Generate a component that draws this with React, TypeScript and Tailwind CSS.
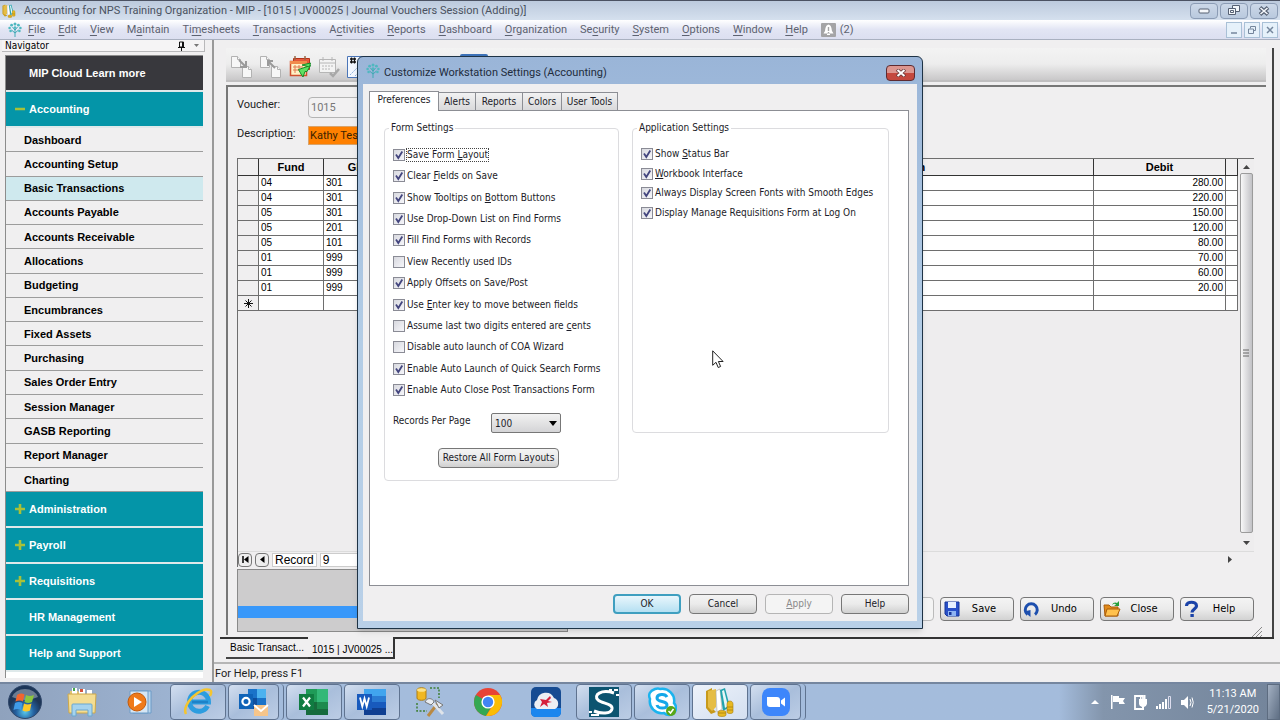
import React from "react";

const menus: [string, string, string][] = [
  ["", "F", "ile"], ["", "E", "dit"], ["", "V", "iew"], ["M", "a", "intain"], ["Ti", "m", "esheets"],
  ["", "T", "ransactions"], ["A", "c", "tivities"], ["", "R", "eports"], ["", "D", "ashboard"],
  ["", "O", "rganization"], ["Se", "c", "urity"], ["", "S", "ystem"], ["", "O", "ptions"],
  ["", "W", "indow"], ["", "H", "elp"],
];

const navItems = [
  "Dashboard", "Accounting Setup", "Basic Transactions", "Accounts Payable", "Accounts Receivable",
  "Allocations", "Budgeting", "Encumbrances", "Fixed Assets", "Purchasing", "Sales Order Entry",
  "Session Manager", "GASB Reporting", "Report Manager", "Charting",
];

const navSections: [string, boolean][] = [
  ["Administration", true], ["Payroll", true], ["Requisitions", true],
  ["HR Management", false], ["Help and Support", false],
];

const rows: [string, string, string][] = [
  ["04", "301", "280.00"], ["04", "301", "220.00"], ["05", "301", "150.00"], ["05", "201", "120.00"],
  ["05", "101", "80.00"], ["01", "999", "70.00"], ["01", "999", "60.00"], ["01", "999", "20.00"],
];

type Setting = [string, string, string, boolean];
const formSettings: Setting[] = [
  ["Save Form ", "L", "ayout", true], ["Clear ", "F", "ields on Save", true],
  ["Show Tooltips on ", "B", "ottom Buttons", true], ["Use Drop-Down List on Find Forms", "", "", true],
  ["Fill Find Forms with Records", "", "", true], ["View Recently used IDs", "", "", false],
  ["Apply Offsets on Save/Post", "", "", true], ["Use ", "E", "nter key to move between fields", true],
  ["Assume last two digits entered are ", "c", "ents", false], ["Disable auto launch of COA Wizard", "", "", false],
  ["Enable Auto Launch of Quick Search Forms", "", "", true], ["Enable Auto Close Post Transactions Form", "", "", true],
];
const appSettings: Setting[] = [
  ["Show ", "S", "tatus Bar", true], ["", "W", "orkbook Interface", true],
  ["Always Display Screen Fonts with Smooth Edges", "", "", true],
  ["Display Manage Requisitions Form at Log On", "", "", true],
];

function TreeLogo() {
  return (
    <svg width="14" height="15" viewBox="0 0 14 15" fill="none" stroke="#3fa9b5">
      <path d="M7 15V6M7 11L3.5 8M7 11l3.5-3M7 8L4.5 5M7 8l2.5-3" strokeWidth="1" />
      <g fill="#4fb8c0" stroke="none">
        <circle cx="7" cy="2" r="1.5" /><circle cx="3.6" cy="3.2" r="1.4" /><circle cx="10.4" cy="3.2" r="1.4" />
        <circle cx="1.6" cy="6" r="1.3" /><circle cx="12.4" cy="6" r="1.3" /><circle cx="2.6" cy="9" r="1.3" />
        <circle cx="11.4" cy="9" r="1.3" /><circle cx="7" cy="5.4" r="1.2" />
      </g>
    </svg>
  );
}

function BooksIcon({ size }: { size: number }) {
  return (
    <svg width={size} height={size} viewBox="0 0 30 30">
      <path d="M1 4l6-3v20l4 4-5 2-5-6z" fill="#c79a1c" />
      <path d="M3 4l8-2v18l-4 4-4-4z" fill="#e5bd45" />
      <path d="M11 4l4-2 2 20-5 3z" fill="#fff" stroke="#a9a79d" strokeWidth=".6" />
      <path d="M15 3l5-2 5 19-7 4z" fill="#23a3ad" />
      <path d="M17 4l2-1 4 16-3 2z" fill="#e8f6f6" />
      <path d="M22 17c0-4 6-4 6 0v8c0 2-6 2-6 0zM13 25c0-2 8-2 8 0v3c0 2-8 2-8 0z" fill="#e8b922" stroke="#a87f10" strokeWidth=".6" />
      <path d="M22 20h6M22 23h6M13 26h8" stroke="#a87f10" strokeWidth=".8" />
    </svg>
  );
}

const caption = "flex h-4 w-7 items-center justify-center rounded-sm border border-[#8b9cb5] bg-linear-to-b from-[#ccd8e8] to-[#b9c9de]";
const child = "flex h-4 w-4 items-center justify-center border border-[#a9c0d6] bg-[#e6f1fa]";

function TitleBar() {
  return (
    <header className="flex h-5 items-center justify-between border-t border-[#4b5262] bg-linear-to-b from-[#bccadd] to-[#d5e0ee] pr-0.5 pl-0.5">
      <div className="flex items-center gap-2">
        <BooksIcon size={14} />
        <h1 className="font-['Roboto',sans-serif] text-[11px] leading-4 whitespace-nowrap text-[#4a5260]">
          Accounting for NPS Training Organization - MIP - [1015 | JV00025 | Journal Vouchers Session (Adding)]
        </h1>
      </div>
      <div className="flex gap-0.5">
        <button aria-label="Minimize" className={caption}>
          <svg width="12" height="6" viewBox="0 0 12 6"><rect x="1" y="1" width="10" height="4" rx="1" fill="#f4f7fb" stroke="#566173" /></svg>
        </button>
        <button aria-label="Restore" className={caption}>
          <svg width="12" height="11" viewBox="0 0 12 11" fill="#f4f7fb" stroke="#566173"><path d="M4.5.5h7v6h-7z" /><path d="M.5 3.500h7v6h-7z" /><path d="M2.500 5.500h3v2h-3z" /></svg>
        </button>
        <button aria-label="Close" className={caption}>
          <svg width="12" height="10" viewBox="0 0 12 10"><path d="M2 1.500l8 7M10 1.500l-8 7" stroke="#566173" strokeWidth="3.800" /><path d="M2.500 2l7 6M9.500 2l-7 6" stroke="#f4f7fb" strokeWidth="1.600" /></svg>
        </button>
      </div>
    </header>
  );
}

function MenuBar() {
  return (
    <nav className="flex h-5 items-center justify-between border-b border-[#a9b0c0] bg-linear-to-b from-white via-[#e2e5f4] to-[#dcdff0] pr-0.5 pl-2">
      <div className="flex items-center">
        <TreeLogo />
        <ul className="flex items-center gap-[13px] pl-1.5 font-['Roboto',sans-serif] text-[11px] leading-4 text-[#5d6270]">
          {menus.map(([a, b, c]) => (
            <li key={a + b + c}><button>{a}<span className="underline underline-offset-2">{b}</span>{c}</button></li>
          ))}
          <li>
            <button className="flex items-center gap-1">
              <svg width="15" height="14" viewBox="0 0 15 14"><rect width="15" height="14" rx="1" fill="#a4a4a6" /><path d="M7.500 1.500c-3 1-3 4-3.500 6.500L2.500 10.500h10L11 8c-.5-2.500-.5-5.500-3.500-6.500z" fill="#fff" /><path d="M7.500 4v4M7.500 9v1" stroke="#a4a4a6" strokeWidth="1.400" /><path d="M6 11.500h3" stroke="#fff" /></svg>
              (2)
            </button>
          </li>
        </ul>
      </div>
      <div className="flex gap-0.5 text-[#75869c]">
        <button aria-label="Minimize document" className={child}><svg width="8" height="8"><path d="M1 7h6" stroke="currentColor" strokeWidth="1.500" /></svg></button>
        <button aria-label="Restore document" className={child}><svg width="8" height="8" fill="none" stroke="currentColor"><path d="M2.500 2.500v-2h5v4h-2M.5 3h5v4.500h-5z" /></svg></button>
        <button aria-label="Close document" className={child}><svg width="8" height="8"><path d="M1 1l6 6M7 1L1 7" stroke="currentColor" strokeWidth="1.500" /></svg></button>
      </div>
    </nav>
  );
}

const section = "flex grow-[356] basis-0 items-center border-b-2 border-[#dfe9ea] bg-[#0495a8] text-left text-white";

function Navigator() {
  return (
    <aside className="flex w-[212px] shrink-0 flex-col bg-[#f0eff0] pr-[7px] pb-1 pl-0.5">
      <div className="flex h-3 items-center justify-between border-r border-b border-[#b8b8ba] bg-[#f5f4f5] px-[3px]">
        <h2 className="font-['DejaVu_Sans_Condensed','DejaVu_Sans',sans-serif] text-[10px] leading-3">Navigator</h2>
        <svg width="24" height="10" viewBox="0 0 24 10"><path d="M2.500 1h4v5h-4zM5.500 1v5M1 6.500h7M4.500 7v3" fill="none" stroke="#111" /><path d="M17 3h5l-2.500 3z" fill="#777" /></svg>
      </div>
      <div className="mt-[3px] mr-0.5 ml-[3px] flex flex-1 flex-col border-t border-l border-[#8c8c8c] bg-white pb-1.5 font-['Liberation_Sans',sans-serif] text-[11px] leading-4 font-bold">
        <button className="flex grow-[356] basis-0 items-center border-b-2 border-[#dfe9ea] bg-[#38383d] pl-[23px] text-white">MIP Cloud Learn more</button>
        <button className={section}>
          <span className="flex w-[23px] justify-center pl-1"><svg width="10" height="4"><path d="M0 2h10" stroke="#a9c138" strokeWidth="2.500" /></svg></span>Accounting
        </button>
        {navItems.map((n) => (
          <a key={n} href="#" className={"flex grow-[244] basis-0 items-center border-b border-[#9c9c9c] pl-[18px] text-black " + (n === "Basic Transactions" ? "bg-[#cfe9ee]" : "bg-[#f0eff0]")}>{n}</a>
        ))}
        {navSections.map(([n, plus]) => (
          <button key={n} className={section}>
            <span className="flex w-[23px] justify-center pl-1">
              {plus && <svg width="10" height="10"><path d="M0 5h10M5 0v10" stroke="#a9c138" strokeWidth="2.600" /></svg>}
            </span>{n}
          </button>
        ))}
      </div>
    </aside>
  );
}

function PagesIcon({ up }: { up: boolean }) {
  return (
    <svg width="22" height="22" viewBox="0 0 22 22" fill="#f7f7f7" stroke="#b2b2b2">
      <path d="M.5.5h6l3 3v8h-9z" /><path d="M6.500.5v3h3" />
      <path d="M11.500 10.500h6l3 3v8h-9z" /><path d="M17.500 10.500v3h3" />
      <path d={up ? "M15 12L9 6M8 10V5h5" : "M8 4l6 6M15 5v6H9"} stroke="#9a9a9a" strokeWidth="2" fill="none" />
    </svg>
  );
}

function Toolbar() {
  return (
    <div className="flex h-[34px] items-center gap-[7px] border-b-2 border-[#c0bfc0] bg-linear-to-b from-[#f3f3f3] via-[#ededed] to-[#c9c8c9] pt-1.5 pl-[5px]">
      <button aria-label="Copy"><PagesIcon up={false} /></button>
      <button aria-label="Paste"><PagesIcon up /></button>
      <button aria-label="Schedule">
        <svg width="22" height="22" viewBox="0 0 22 22"><path d="M4.500 2.500h16v11h-16z" fill="#e9583c" stroke="#b33217" /><path d="M1.500 5.500h16v14h-16z" fill="#fff1c5" stroke="#d0502e" strokeWidth="1.500" /><path d="M1 5h17v3H1z" fill="#f18b4c" /><path d="M4 11h10M4 14h6M6 9v8M10 9v6" stroke="#e07a50" /><path d="M6 0v4M16 0v4" stroke="#964" strokeWidth="1.500" /><path d="M9.500 13.500l12-4-3.500 6h-2l-2 5.500-2-3z" fill="#5fe062" stroke="#178a28" /><path d="M13 9l8.500-2-1 4z" fill="#5fe062" stroke="#178a28" /></svg>
      </button>
      <button aria-label="Complete">
        <svg width="22" height="22" viewBox="0 0 22 22" fill="#f3f3f3" stroke="#b6b6b6"><path d="M1.500 3.500h16v13h-16zM1.500 7h16M5 1v4M14 1v4" /><path d="M4 10h11M4 13h8" strokeDasharray="2 1" /><path d="M12 17l3 3 6-7" fill="none" stroke="#a8a8a8" strokeWidth="2.500" /></svg>
      </button>
      <button aria-label="Number">
        <svg width="22" height="22" viewBox="0 0 22 22"><path d="M.5.5h21v21H.5z" fill="#f3f8ff" stroke="#4b76b8" /><path d="M3 3h6M3 6h6M4.500 1.500v6M7.500 1.500v6" stroke="#111" strokeWidth="1.300" /><path d="M3 19l8-8M8 20l9-9" stroke="#8fb2dc" strokeDasharray="2 1" /></svg>
      </button>
      <button aria-label="Search" className="ml-[84px] h-7 w-7 self-start rounded-xs bg-[#3d72b8]" />
    </div>
  );
}

const cell = "border-r border-b border-[#6e6e6e] px-0.5";

function Grid() {
  return (
    <div className="flex flex-1 flex-col border-t border-l border-[#6e6e6e] bg-[#eeedee] font-['Liberation_Sans',sans-serif]">
      <div className="flex flex-1">
        <div className="flex-1">
          <table className="w-full table-fixed border-separate border-spacing-0 bg-white text-[10px] leading-3">
            <colgroup>
              <col className="w-[21px]" /><col className="w-[65px]" /><col className="w-[94px]" /><col className="w-[279px]" />
              <col /><col className="w-[132px]" /><col className="w-[12px]" />
            </colgroup>
            <thead className="bg-[#f0eff0] text-[11px]">
              <tr className="h-[17px]">
                {["", "Fund", "GL Code", "", "Description", "Debit", ""].map((h, i) => (
                  <th key={i} className="border-r border-b border-[#333] p-0 font-bold">{h}</th>
                ))}
              </tr>
            </thead>
            <tbody>
              {rows.map(([f, g, d], i) => (
                <tr key={i} className="h-[15px]">
                  <td className={cell + " bg-[#f0eff0]"} /><td className={cell}>{f}</td><td className={cell}>{g}</td>
                  <td className={cell} /><td className={cell} /><td className={cell + " text-right"}>{d}</td><td className={cell} />
                </tr>
              ))}
              <tr className="h-[15px]">
                <td className="border-r border-b border-[#6e6e6e] bg-[#f0eff0] p-0">
                  <svg className="mx-auto" width="9" height="9"><path d="M4.500 0v9M0 4.500h9M1.500 1.500l6 6M7.500 1.500l-6 6" stroke="#111" /></svg>
                </td>
                <td className={cell} /><td className={cell} /><td className={cell} /><td className={cell} /><td className={cell} /><td className={cell} />
              </tr>
            </tbody>
          </table>
        </div>
        <div className="flex w-4 flex-col items-center py-1.5">
          <svg width="7" height="4"><path d="M0 4h7L3.500 0z" fill="#444" /></svg>
          <div className="mt-1 mb-2 flex w-[13px] flex-1 items-center justify-center rounded-xs border border-[#9b9b9b] bg-linear-to-r from-[#f8f8f8] to-[#c2c2c6]">
            <svg width="6" height="8"><path d="M0 1h6M0 4h6M0 7h6" stroke="#666" /></svg>
          </div>
          <svg width="7" height="4"><path d="M0 0h7L3.500 4z" fill="#444" /></svg>
        </div>
      </div>
      <div className="flex h-4 items-center gap-[3px] border-t border-[#dcdcdc] bg-[#f0eff0] text-[12px] leading-3">
        <button aria-label="First record" className="flex h-3.5 w-3.5 items-center justify-center rounded-sm border border-[#777] bg-[#eee]"><svg width="7" height="7"><path d="M1 0v7" stroke="#000" strokeWidth="1.500" /><path d="M6.500 0v7L2 3.500z" /></svg></button>
        <button aria-label="Previous record" className="flex h-3.5 w-3.5 items-center justify-center rounded-sm border border-[#777] bg-[#eee]"><svg width="7" height="7"><path d="M5.500 0v7L1 3.500z" /></svg></button>
        <label htmlFor="record" className="border border-[#ccc] bg-white px-0.5">Record</label>
        <input id="record" defaultValue="9" className="h-3.5 w-[80px] border border-[#ccc] bg-white pl-0.5" />
        <svg className="mr-[22px] ml-auto" width="4" height="7"><path d="M0 0v7l4-3.500z" fill="#444" /></svg>
      </div>
    </div>
  );
}

function ActionButton({ label, children }: { label: string; children: React.ReactNode }) {
  return (
    <button className="flex h-6 w-[74px] items-center rounded-sm border border-[#777] bg-linear-to-b from-[#f4f4f4] via-[#ebebeb] to-[#d2d2d2] pr-1.5 pl-0.5 font-['DejaVu_Sans_Condensed','DejaVu_Sans',sans-serif] text-[11px]">
      <svg width="18" height="18" viewBox="0 0 18 18">{children}</svg>
      <span className="flex-1 text-center">{label}</span>
    </button>
  );
}

function FormWindow() {
  return (
    <section className="flex flex-1 flex-col border-r-2 border-[#444] pr-1.5 pl-1.5">
      <Toolbar />
      <div className="mt-[3px] flex flex-1 flex-col border-t-2 border-l-2 border-[#777] pt-2.5 pr-3 pl-[9px]">
        <div className="flex flex-col gap-2 font-['Roboto',sans-serif] text-[11px] leading-4">
          <div className="flex items-start">
            <label htmlFor="voucher" className="h-5 w-[71px] text-[#222]">Voucher:</label>
            <input id="voucher" readOnly defaultValue="1015" className="h-[21px] w-[160px] rounded-sm border border-[#b4b4b4] bg-[#f2f1f2] px-0.5 text-[#777]" />
          </div>
          <div className="flex items-start">
            <label htmlFor="description" className="h-5 w-[71px] text-[#222]">Descriptio<u>n</u>:</label>
            <input id="description" defaultValue="Kathy Test" className="h-[19px] w-[400px] border border-[#d9a36a] bg-[#ff8000] px-px text-[#3a2200]" />
          </div>
        </div>
        <div className="mt-3 flex flex-1"><Grid /></div>
        <div className="flex h-[68px] items-start justify-between pt-0.5">
          <div className="flex h-[63px] w-[331px] flex-col border border-[#8a8a8a] bg-[#cdcccd] pt-9">
            <div className="h-3 bg-[#3898fa]" />
          </div>
          <div className="flex gap-1.5 pt-7">
            <button aria-label="Post" className="h-6 w-[74px] rounded-sm border border-[#bbb] bg-[#f4f4f4]" />
            <ActionButton label="Save"><path d="M2 2h14v14H4l-2-2z" fill="#2950c8" stroke="#17369a" /><path d="M5 2h8v6H5z" fill="#e6f0ff" /><path d="M5 11h8v5H5z" fill="#8fb4f2" /><path d="M6 12h2.500v3H6z" fill="#17369a" /></ActionButton>
            <ActionButton label="Undo"><path d="M4.500 14.500A6 6 0 1 1 12 14.500" fill="none" stroke="#1d4fae" strokeWidth="3" /><path d="M1 11.500l6.500-1.500v7z" fill="#1d4fae" /></ActionButton>
            <ActionButton label="Close"><path d="M1 5h5l2 2h7v9H2z" fill="#e28a1a" stroke="#a95e0c" /><path d="M4 9h13l-3 7H2z" fill="#ffc14d" stroke="#a95e0c" /><path d="M9 5c1-3 4-3 5-2l2-2v5h-5l2-1.500c-1-1-2-1-4 .500z" fill="#25a03c" /></ActionButton>
            <ActionButton label="Help"><path d="M3.500 6c0-5 10-5 10 0 0 3-4.500 3-4.500 6.500" fill="none" stroke="#1b43a8" strokeWidth="3.200" /><path d="M7.400 14h3.400v3H7.400z" fill="#1b43a8" /></ActionButton>
          </div>
        </div>
      </div>
      <svg className="-mt-2 mr-1 ml-auto" width="10" height="10"><path d="M0 10L10 0M4 10l6-6M8 10l2-2" stroke="#888" /></svg>
    </section>
  );
}

function Workspace() {
  return (
    <main className="flex flex-1 flex-col border-l-2 border-[#999] bg-[#f0eff0]">
      <div className="flex flex-1 flex-col pt-2 pr-1.5 pl-1.5">
        <FormWindow />
        <div className="flex h-[22px] font-['Liberation_Sans',sans-serif] text-[10px] leading-[18px] whitespace-nowrap">
          <button className="flex w-[88px] justify-end border-t-2 border-[#333]"><span className="h-5 border-b-2 border-[#444] px-1">Basic Transact...</span></button>
          <button className="w-[87px] border-r-2 border-b-2 border-[#333] px-1 pt-1 text-left">1015 | JV00025 ...</button>
          <div className="flex-1 border-t-2 border-[#333]" />
        </div>
      </div>
      <footer className="mt-[3px] h-5 border-t-2 border-[#b5b5b5] pt-px pl-px font-['Roboto',sans-serif] text-[11px] leading-[18px] text-[#222]">For Help, press F1</footer>
    </main>
  );
}

function Check({ item, id, focus }: { item: Setting; id: string; focus?: boolean }) {
  const [a, u, b, on] = item;
  return (
    <li className="flex items-center gap-0.5">
      <span className="grid">
        <input type="checkbox" id={id} defaultChecked={on} className="peer col-start-1 row-start-1 h-3 w-3 appearance-none border border-[#8a8b95] bg-linear-to-br from-[#d8d9df] to-[#f6f6fa]" />
        <svg className="pointer-events-none invisible col-start-1 row-start-1 peer-checked:visible" width="12" height="12"><path d="M3 5.500l2.300 3.500L9.300 2.500" fill="none" stroke="#43457e" strokeWidth="1.800" /></svg>
      </span>
      <label htmlFor={id} className={"leading-3 whitespace-nowrap outline-dotted outline-[#444] " + (focus ? "outline-1" : "outline-0")}>{a}<u>{u}</u>{b}</label>
    </li>
  );
}

const dlgButton = "h-5 rounded-sm border border-[#777] bg-linear-to-b from-[#f3f3f3] via-[#ebebeb] to-[#d0d0d0] text-center leading-4";
const tab = "h-[18px] border-t border-r border-[#8c8e94] bg-linear-to-b from-[#f2f2f2] to-[#d9d9db]";

function SettingsDialog() {
  return (
    <div className="absolute inset-0 flex items-start justify-center pt-14">
      <div role="dialog" aria-label="Customize Workstation Settings (Accounting)" className="w-[566px] rounded-t-md border border-[#1e3346] bg-linear-to-b from-[#9ab5d8] via-[#b3cde6] to-[#b9d0e8] px-[5px] pb-[7px] font-['DejaVu_Sans_Condensed','DejaVu_Sans',sans-serif] text-[10px] text-[#1c1c28] shadow-md">
        <div className="flex h-[27px] items-center pr-0.5 pl-[3px]">
          <TreeLogo />
          <h2 className="flex-1 pt-1 pl-1 font-['Roboto',sans-serif] text-[11px] leading-4 text-[#222c3c]">Customize Workstation Settings (Accounting)</h2>
          <button aria-label="Close" className="mt-1 flex h-4 w-[29px] items-center justify-center rounded-sm border border-[#5e2b30] bg-linear-to-b from-[#dc9690] from-50% to-[#c4483e] to-50%">
            <svg width="10" height="8"><path d="M1 .5l8 7M9 .5l-8 7" stroke="#6b3a3a" strokeWidth="3.500" /><path d="M1.500 1l7 6M8.500 1l-7 6" stroke="#fff" strokeWidth="2" /></svg>
          </button>
        </div>
        <div className="bg-[#f0eff0] pt-[7px] pr-2 pb-[7px] pl-1.5">
          <div role="tablist" className="flex items-end">
            <button role="tab" aria-selected="true" className="relative -mb-px h-5 w-[70px] border-t border-r border-l border-[#8c8e94] bg-white pb-1">Preferences</button>
            <button role="tab" className={tab + " w-[37px]"}>Alerts</button>
            <button role="tab" className={tab + " w-[47px]"}>Reports</button>
            <button role="tab" className={tab + " w-[39px]"}>Colors</button>
            <button role="tab" className={tab + " w-[56px]"}>User Tools</button>
          </div>
          <div className="flex min-h-[476px] items-start gap-[13px] border border-[#8c8e94] bg-white py-[9px] pl-3.5">
            <fieldset className="w-[235px] min-w-0 rounded-sm border border-[#dcdcdf] pb-3">
              <legend className="ml-1 px-0.5 leading-4">Form Settings</legend>
              <ul className="mt-2 ml-2 flex h-[257px] flex-col justify-around">
                {formSettings.map((s, i) => <Check key={i} item={s} id={"form-" + i} focus={i === 0} />)}
              </ul>
              <div className="mt-3 ml-2 flex">
                <label htmlFor="records" className="w-[98px] leading-4">Records Per Page</label>
                <span className="grid items-center">
                  <select id="records" defaultValue="100" className="col-start-1 row-start-1 h-5 w-[70px] appearance-none rounded-xs border border-[#777] bg-linear-to-b from-[#f2f2f2] to-[#d4d4d6] pl-[3px]">
                    <option>50</option><option>100</option><option>200</option>
                  </select>
                  <svg className="pointer-events-none col-start-1 row-start-1 mr-1 justify-self-end" width="8" height="5"><path d="M0 0h8L4 5z" /></svg>
                </span>
              </div>
              <button className={dlgButton + " mt-[15px] ml-[53px] w-[121px] whitespace-nowrap"}>Restore All Form Layouts</button>
            </fieldset>
            <fieldset className="w-[257px] min-w-0 rounded-sm border border-[#dcdcdf] pb-[209px]">
              <legend className="ml-1 px-0.5 leading-4">Application Settings</legend>
              <ul className="mt-2 ml-2 flex h-[79px] flex-col justify-around">
                {appSettings.map((s, i) => <Check key={i} item={s} id={"app-" + i} />)}
              </ul>
            </fieldset>
          </div>
          <div className="flex justify-end gap-2 pt-2">
            <button className="h-5 w-[68px] rounded-sm border-2 border-[#3f9fc0] bg-linear-to-b from-[#e9f6fc] to-[#b5e0f2] leading-4">OK</button>
            <button className={dlgButton + " w-[68px]"}>Cancel</button>
            <button disabled className="h-5 w-[68px] rounded-sm border border-[#b5b5b5] bg-[#f4f4f4] leading-4 text-[#8a8a8a]"><u>A</u>pply</button>
            <button className={dlgButton + " w-[68px]"}>Help</button>
          </div>
        </div>
      </div>
    </div>
  );
}

function TaskButton({ label, open, stacked, children }: { label: string; open?: boolean; stacked?: boolean; children: React.ReactNode }) {
  return (
    <button aria-label={label} className={"flex w-14 " + (stacked ? "rounded-sm border-r border-[#5f7390] pr-1" : "")}>
      <span className={"flex h-9 flex-1 items-center justify-center " + (open ? "rounded-sm border border-[#5f7390] bg-linear-to-br from-[#d3dff0] via-[#a9bedb] to-[#bccde5]" : "")}>
        <svg width="30" height="30" viewBox="0 0 30 30">{children}</svg>
      </span>
    </button>
  );
}

function Taskbar() {
  return (
    <footer className="flex h-[38px] shrink-0 items-center border-t-2 border-[#75869f]">
      <div className="flex h-full flex-1 items-center bg-linear-to-r from-[#8fa2bd] via-[#a4bcdc] via-25% to-[#a4bcdc]">
        <button aria-label="Start" className="ml-2 w-[46px]">
          <svg width="34" height="34" viewBox="0 0 34 34">
            <defs><radialGradient id="orb" cy=".8"><stop offset="0" stopColor="#57c8ee" /><stop offset=".55" stopColor="#245f9e" /><stop offset="1" stopColor="#1d3658" /></radialGradient></defs>
            <circle cx="17" cy="17" r="16.500" fill="url(#orb)" stroke="#31486a" /><path d="M4 12a13.500 11 0 0 1 26 0q-13 6-26 0z" fill="#fff" opacity=".35" />
            <path d="M9 10q4-2.500 7.500-.5l-1.500 7q-3.500-2-7.500 0z" fill="#f2652e" /><path d="M18 10q3.500 2 8 0l-2 7q-4 2-7.500 0z" fill="#8cc63e" />
            <path d="M7 18q4-2 7.500 0L13 25q-3.500-2-7.500 0z" fill="#3f9be8" /><path d="M16 18.500q3.500 2 7.500 0L22 25.500q-4 2-7.500 0z" fill="#fdc827" />
          </svg>
        </button>
        <div className="flex gap-0.5">
          <TaskButton label="Explorer"><path d="M3 4h8l2 3h13v18H3z" fill="#e3c572" /><path d="M5 1h5v7H5zM12 2h6v6h-6zM20 3h5v6h-5z" fill="#fff" /><path d="M6 1h2v3H6z" fill="#44a84c" /><path d="M13 2h3v3h-3z" fill="#d5543c" /><path d="M1 7h28l-1 19H2z" fill="#f4dd92" stroke="#cda84b" /><path d="M5 29V18q0-1 1-1h18q1 0 1 1v11h-4v-6H9v6z" fill="#a5d3ee" stroke="#6ba7cf" /></TaskButton>
          <TaskButton label="Media Player"><path d="M8 4h18v22H8z" fill="#b8d4ec" stroke="#6d9cc8" /><path d="M5 4h18v22H5z" fill="#d6e6f4" stroke="#6d9cc8" /><circle cx="12" cy="15" r="9" fill="#ef7a1a" stroke="#c45a0a" /><path d="M9 10v10l8-5z" fill="#fff" /></TaskButton>
          <TaskButton label="Internet Explorer" open><path d="M24.500 19a9.500 9.500 0 1 1 1-4H9" fill="none" stroke="#2d9ddf" strokeWidth="5" /><path d="M9 15h16" stroke="#1e82c8" strokeWidth="2.500" /><path d="M3 27C-2 18 17-1 27 3c2 1 1 4 0 6" fill="none" stroke="#f5c52f" strokeWidth="2.500" /></TaskButton>
          <TaskButton label="Outlook" open stacked><path d="M9 2h18v20H9z" fill="#1a73c9" /><path d="M18 2h9v9h-9z" fill="#4cb2ef" /><path d="M9 11h9v11H9z" fill="#0f4f9e" /><path d="M0 7h14v15H0z" fill="#0f63b8" /><circle cx="7" cy="14.500" r="3.600" fill="none" stroke="#fff" strokeWidth="2.200" /><path d="M15 18h14v11H15z" fill="#f6c58a" /><path d="M15 18l7 6 7-6" fill="none" stroke="#fff" strokeWidth="1.800" /></TaskButton>
          <TaskButton label="Excel" open><path d="M7 2h22v26H7z" fill="#1f9b58" /><path d="M18 2h11v13H18z" fill="#33b877" /><path d="M7 15h22v13H7z" fill="#176b3c" /><path d="M18 15h11v7H18z" fill="#1d8a4d" /><path d="M0 7h15v16H0z" fill="#107c41" /><path d="M4 10.500l7 9M11 10.500l-7 9" stroke="#fff" strokeWidth="2.200" /></TaskButton>
          <TaskButton label="Word" open><path d="M7 2h22v7H7z" fill="#41a5ee" /><path d="M7 9h22v6H7z" fill="#2b7cd3" /><path d="M7 15h22v6H7z" fill="#185abd" /><path d="M7 21h22v7H7z" fill="#103f91" /><path d="M0 7h15v16H0z" fill="#185abd" /><path d="M3 10.500l2.300 9 2.200-8 2.200 8 2.300-9" fill="none" stroke="#fff" strokeWidth="1.800" /></TaskButton>
          <TaskButton label="Database Tools"><path d="M2 3c0-3 9-3 9 0v8c0 3-9 3-9 0z" fill="#f0b823" stroke="#b07f10" /><ellipse cx="6.500" cy="3" rx="4.500" ry="1.800" fill="#fbe28a" /><path d="M15 1h9v10M2 16v8h10" fill="none" stroke="#3f7f35" strokeWidth="1.500" strokeDasharray="2 1.500" /><path d="M13 29l10-13" stroke="#b98942" strokeWidth="3" /><path d="M16 14l12 13" stroke="#dfe4ea" strokeWidth="3" /><path d="M10 15c2-5 8-4 9 0l-3 3zM20 13l8 5-4 3z" fill="#e9edf2" stroke="#777" /></TaskButton>
          <TaskButton label="Chrome"><circle cx="15" cy="15" r="14" fill="#e84335" /><path d="M2.900 8A14 14 0 0 0 13 28.900l6-10.500L15 15z" fill="#34a853" /><path d="M27.100 8H15l5 10-7 10.900A14 14 0 0 0 27.100 8z" fill="#fbbc05" /><circle cx="15" cy="15" r="6.600" fill="#fff" /><circle cx="15" cy="15" r="5.200" fill="#4285f4" /></TaskButton>
          <TaskButton label="Cloud Desktop"><rect width="30" height="30" rx="5" fill="#164b92" /><path d="M0 21h30v4q0 5-5 5H5q-5 0-5-5z" fill="#1b86ee" /><path d="M6 22a5 5 0 0 1 0-9 9 9 0 0 1 17-2 6 6 0 0 1 1 11z" fill="#eceef3" /><path d="M9 12l6 1 4-4 1 2-3 3 4 1-5 1 1 4-4-3-4 3 2-5z" fill="#d61f3c" /></TaskButton>
          <TaskButton label="Skyward" open><path d="M0 0h30v30H0z" fill="#0c5470" /><path d="M25 6C12 2 4 8 9 13c4 4 15 3 14 9-1 5-11 5-18 2" fill="none" stroke="#fff" strokeWidth="3" /><path d="M20 3h3M25 3h4M0 25h3M2 28h8M27 8h3" stroke="#fff" strokeWidth="2" /></TaskButton>
          <TaskButton label="Skype" open><path d="M8 2q3-1 5 0a12 12 0 0 1 14 14 7 7 0 0 1-10 10A12 12 0 0 1 3 12Q0 5 8 2z" fill="#fff" stroke="#1bb3ee" strokeWidth="2.500" /><path d="M20 10c-2-4-10-3-10 1 0 5 10 2 10 7 0 4-9 4-10 0" fill="none" stroke="#14a7e8" strokeWidth="3" /><circle cx="24" cy="24" r="5" fill="#59a617" /><path d="M21.500 24l2 2 3-4" fill="none" stroke="#fff" strokeWidth="1.500" /></TaskButton>
          <button aria-label="MIP Accounting" className="flex h-9 w-14 items-center justify-center rounded-sm border border-[#5f7390] bg-linear-to-br from-[#edf2fa] to-[#d3dff0]"><BooksIcon size={30} /></button>
          <TaskButton label="Zoom" open stacked><rect x="1" y="1" width="28" height="28" rx="8" fill="#3d86fb" /><path d="M6 10h10q3 0 3 3v7H9q-3 0-3-3z" fill="#fff" /><path d="M20 13.500l4-3v9l-4-3z" fill="#fff" /></TaskButton>
        </div>
      </div>
      <div className="flex h-full items-center bg-linear-to-r from-[#a4bcdc] via-[#8395ac] via-20% to-[#73849a] pl-[30px] font-['Roboto',sans-serif] text-[11px] leading-4 text-white">
        <svg width="110" height="20" viewBox="0 0 110 20" fill="#fff">
          <path d="M2 12h8L6 8z" />
          <path d="M22 3h1.500v14H22zM24 4h6v2h6l-2 3 2 3h-6v-2h-6z" />
          <path d="M46 4h8v13h-8z" fill="none" stroke="#fff" strokeWidth="1.800" /><path d="M50 7h8v5q-1 3-3 3v3h-2v-3q-3-1-3-3zM51 3h1.500v4H51zM55 3h1.500v4H55z" />
          <path d="M67 14h2v3h-2zM70 12h2v5h-2zM73 10h2v7h-2zM76 7h2v10h-2z" /><path d="M79.500 4.500h2v12h-2z" fill="none" stroke="#dde" />
          <path d="M92 8h3l4-4v13l-4-4h-3z" /><path d="M101 7q2 3.500 0 7M103 5.500q2.500 5 0 10" fill="none" stroke="#fff" />
        </svg>
        <div className="px-2 text-center"><p>11:13 AM</p><p>5/21/2020</p></div>
        <button aria-label="Show desktop" className="h-full w-[13px] border border-[#5d6c80] bg-linear-to-br from-[#a3b0c2] to-[#5f6f84]" />
      </div>
    </footer>
  );
}

export default function App() {
  return (
    <div className="relative flex min-h-screen flex-col overflow-hidden bg-[#f0eff0]">
      <TitleBar />
      <MenuBar />
      <div className="flex flex-1">
        <Navigator />
        <Workspace />
      </div>
      <Taskbar />
      <SettingsDialog />
      <svg className="pointer-events-none absolute top-[350px] left-[712px]" width="12" height="19" viewBox="0 0 12 19"><path d="M.7.800v14.500l3.300-3 2.200 5.200 2.400-1-2.200-5h4.700z" fill="#fff" stroke="#222" /></svg>
    </div>
  );
}
